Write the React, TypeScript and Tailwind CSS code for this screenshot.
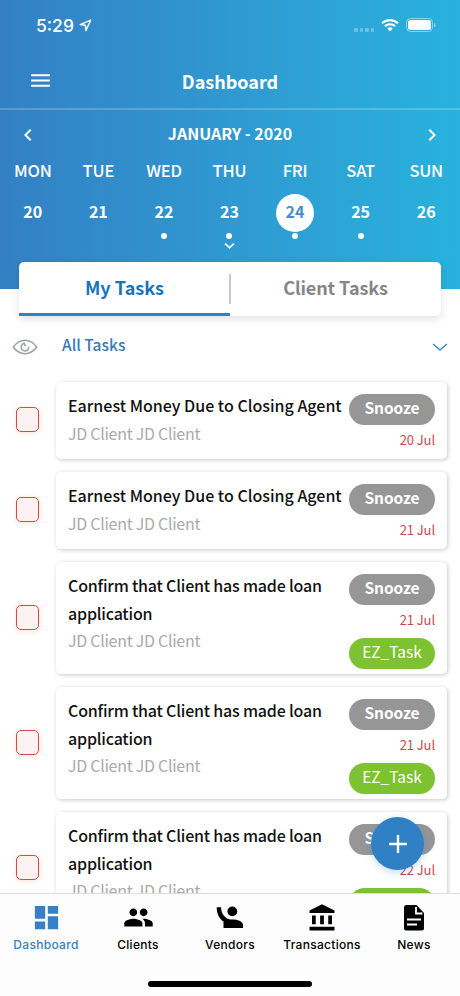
import clsx from "clsx";
import { MdAccountBalance, MdChevronLeft, MdChevronRight, MdDashboard, MdMenu, MdPeople } from "react-icons/md";

const days = [
  { name: "MON", date: 20 },
  { name: "TUE", date: 21 },
  { name: "WED", date: 22, dot: true },
  { name: "THU", date: 23, dot: true },
  { name: "FRI", date: 24, dot: true, selected: true },
  { name: "SAT", date: 25, dot: true },
  { name: "SUN", date: 26 },
];

type Task = { title: string[]; client: string; due: string; tag?: string };

const tasks: Task[] = [
  { title: ["Earnest Money Due to Closing Agent"], client: "JD Client JD Client", due: "20 Jul" },
  { title: ["Earnest Money Due to Closing Agent"], client: "JD Client JD Client", due: "21 Jul" },
  { title: ["Confirm that Client has made loan", "application"], client: "JD Client JD Client", due: "21 Jul", tag: "EZ_Task" },
  { title: ["Confirm that Client has made loan", "application"], client: "JD Client JD Client", due: "21 Jul", tag: "EZ_Task" },
  { title: ["Confirm that Client has made loan", "application"], client: "JD Client JD Client", due: "22 Jul", tag: "EZ_Task" },
];

function StatusBar() {
  return (
    <div className="flex h-[52px] items-center pr-6 pl-9">
      <span className="font-['Inter',sans-serif] text-[17.5px] font-medium">5:29</span>
      <svg className="mb-0.5 ml-[5px] h-[13px] w-[13px]" viewBox="0 0 13 13" fill="none" stroke="currentColor" strokeWidth="1.4" strokeLinejoin="round">
        <path d="M11.7 1.2 1.2 5.6l5.1.7.5 5.3z" />
      </svg>
      <div className="mt-2 ml-auto flex gap-[2px] opacity-30">
        {[0, 1, 2, 3].map((i) => (
          <span key={i} className="h-[4px] w-[3.5px] rounded-[1px] bg-white" />
        ))}
      </div>
      <svg className="mb-0.5 ml-[7px] h-[13px] w-[18px]" viewBox="0 0 18 13" fill="none" stroke="currentColor" strokeWidth="2.2">
        <path d="M1 4.3a11.6 11.6 0 0 1 16 0M3.9 7.3a7.4 7.4 0 0 1 10.2 0" />
        <path d="M6.3 9.6a4 4 0 0 1 5.4 0L9 12.6z" fill="currentColor" stroke="none" />
      </svg>
      <svg className="mb-0.5 ml-[7px] h-[14px] w-[30px]" viewBox="0 0 30 14" fill="none">
        <rect x="0.5" y="0.5" width="26" height="13" rx="4" stroke="white" opacity=".45" />
        <rect x="2" y="2" width="23" height="10" rx="2.5" fill="white" />
        <path d="M28 5v4.4c1-.4 1.5-1.3 1.5-2.2S29 5.4 28 5z" fill="white" opacity=".5" />
      </svg>
    </div>
  );
}

function WeekStrip() {
  return (
    <div className="grid w-[459px] grid-cols-7">
      {days.map((d) => (
        <div key={d.name} className="flex flex-col items-center">
          <span className="-mt-px h-6 text-[16.5px] leading-6 font-medium tracking-[-0.2px]">{d.name}</span>
          <span
            className={clsx(
              "mt-3 flex size-[38px] items-center justify-center rounded-full pb-[5px] text-base font-bold",
              d.selected && "bg-white text-[#4490cc]"
            )}
          >
            {d.date}
          </span>
          {d.dot && <span className="mt-px size-[6px] rounded-full bg-white" />}
          {d.name === "THU" && (
            <svg className="mt-1 h-[6px] w-[11px]" viewBox="0 0 11 6" fill="none" stroke="currentColor" strokeWidth="1.7">
              <path d="m1 .7 4.5 4 4.5-4" />
            </svg>
          )}
        </div>
      ))}
    </div>
  );
}

function Header() {
  return (
    <header className="h-[289px] bg-linear-to-r from-[#3380c4] to-[#28b2dd] text-white">
      <StatusBar />
      <div className="grid h-[58px] grid-cols-[80px_1fr_80px] items-center border-b-2 border-white/20">
        <MdMenu className="mt-px ml-[28px] size-[25px]" />
        <h1 className="pt-[2px] text-center text-[18px] font-bold">Dashboard</h1>
      </div>
      <div className="flex h-[49px] items-center justify-between px-4">
        <MdChevronLeft className="size-[24px]" />
        <span className="mb-[3px] text-[16px] font-bold">JANUARY - 2020</span>
        <MdChevronRight className="size-[24px]" />
      </div>
      <WeekStrip />
    </header>
  );
}

function Tabs() {
  return (
    <div className="relative mx-[19px] -mt-[27px] grid h-[54px] grid-cols-2 rounded-[5px] bg-white text-center text-[18px] font-bold shadow-[0_3px_8px_rgba(0,0,0,0.12)]">
      <button className="border-b-[3px] border-[#3580c0] pb-px text-[#1674bc]">My Tasks</button>
      <button className="border-b-[3px] border-transparent pb-px tracking-[-0.1px] text-[#858585]">Client Tasks</button>
      <span className="absolute top-3 left-[210px] h-[30px] w-[2px] bg-[#c8c8c8]" />
    </div>
  );
}

function Filter() {
  return (
    <div className="flex h-[58px] items-center pr-[12px] pl-[12px]">
      <svg className="mt-[3px] h-4 w-[26px]" viewBox="0 0 26 16" fill="none" stroke="#98a2a5" strokeWidth="1.5" strokeLinejoin="round">
        <path d="M1.2 8c7-9 16.600-9 23.600 0-7 9-16.600 9-23.600 0z" />
        <path d="M13 4.300a3.800 3.800 0 1 0 3.700 3.300M13 4.300c-1 1 0 2.700 1.300 2" />
      </svg>
      <span className="ml-6 text-[15.5px] font-medium text-[#3679b7]">All Tasks</span>
      <svg className="mt-[3px] ml-auto h-2 w-4" viewBox="0 0 16 8" fill="none" stroke="#3a86c8" strokeWidth="1.4">
        <path d="m1 1 7 6 7-6" />
      </svg>
    </div>
  );
}

function TaskRow({ task }: { task: Task }) {
  return (
    <div className="flex items-center">
      <span className="mt-[-2px] ml-[15.5px] h-[25px] w-[23.5px] rounded-[5px] border-[1.5px] border-[#cf4d45] bg-[#fdf2f1] shadow-[0_1px_6px_rgba(240,90,60,0.2)]" />
      <div
        className={clsx(
          "ml-[17px] flex w-[391px] justify-between rounded-[5px] bg-white pr-3 pl-3 shadow-[1px_1px_4px_rgba(0,0,0,0.22)]",
          task.tag ? "h-[112px]" : "h-[77px]"
        )}
      >
        <div className="pt-[10px] whitespace-nowrap">
          {task.title.map((line) => (
            <p
              key={line}
              className={clsx("text-[16px] leading-[27.5px] font-medium text-[#111]", task.tag && "tracking-[-0.2px]")}
            >
              {line}
            </p>
          ))}
          <p className="text-[16px] leading-[27px] tracking-[-0.28px] text-[#aaa]">{task.client}</p>
        </div>
        <div className="flex shrink-0 flex-col items-end pt-[12px]">
          <span className="h-[31px] w-[86px] rounded-full bg-[#969696] text-center text-[15.5px] leading-[27px] font-bold tracking-[-0.1px] text-white">
            Snooze
          </span>
          <span className="mt-[3px] h-[25px] text-[13px] leading-6 tracking-[-0.1px] text-[#c9494c]">{task.due}</span>
          {task.tag && (
            <span className="mt-[5px] h-[31px] w-[86px] rounded-full bg-[#7dc230] text-center text-[15.5px] leading-[27px] text-white">{task.tag}</span>
          )}
        </div>
      </div>
    </div>
  );
}

function VendorIcon() {
  return (
    <svg className="size-7" viewBox="0 0 28 28" fill="currentColor">
      <circle cx="16.3" cy="7.4" r="4.9" />
      <path d="M.7 3.2h4.400c0 5.500 2.500 9.800 7.400 11.700 1.200.5 2.500.6 4 .6 4.500 0 10.500 1.600 10.500 5.300V24H7.500v-6.500C3.200 14.800.7 9.500.7 3.200z" />
    </svg>
  );
}

function NewsIcon() {
  return (
    <svg className="size-7" viewBox="0 0 28 28">
      <path d="M6.5 1h10L24 9v15.500a2 2 0 0 1-2 2H6a2 2 0 0 1-2-2V3.500A2.500 2.500 0 0 1 6.500 1z" fill="currentColor" />
      <path d="M16 3v6.500h6.500M7 15.500h14M7 20.500h10" fill="none" stroke="white" strokeWidth="1.8" />
    </svg>
  );
}

const navItems = [
  { label: "Dashboard", icon: <MdDashboard className="size-[31px]" />, active: true },
  { label: "Clients", icon: <MdPeople className="size-[31px]" /> },
  { label: "Vendors", icon: <VendorIcon /> },
  { label: "Transactions", icon: <MdAccountBalance className="size-[30px]" /> },
  { label: "News", icon: <NewsIcon /> },
];

function BottomNav() {
  return (
    <nav className="absolute inset-x-0 bottom-0 h-[103px] border-t border-[#dcdcdc] bg-[#fdfdfd]">
      <div className="grid grid-cols-5 pt-2">
        {navItems.map((item) => (
          <div key={item.label} className={clsx("flex flex-col items-center", item.active ? "text-[#3681c5]" : "text-black")}>
            <div className="flex h-[31px] items-center">{item.icon}</div>
            <span className="mt-[3px] font-['Inter',sans-serif] text-[12px] leading-[18px] font-medium tracking-[0.3px]">{item.label}</span>
          </div>
        ))}
      </div>
      <div className="mx-auto mt-[27px] h-[6px] w-[164px] rounded-full bg-black" />
    </nav>
  );
}

export default function App() {
  return (
    <div className="relative h-[996px] w-[460px] overflow-hidden bg-white font-['Noto_Sans_CJK_SC','Noto_Sans',sans-serif]">
      <Header />
      <Tabs />
      <Filter />
      <main className="mt-2 flex flex-col gap-[13.1px]">
        {tasks.map((task, i) => (
          <TaskRow key={i} task={task} />
        ))}
      </main>
      <button className="absolute top-[817px] left-[371px] flex size-[53px] items-center justify-center rounded-full bg-[#2f80c5] shadow-[0_2px_9px_rgba(47,128,197,0.3)]">
        <svg className="size-[18px]" viewBox="0 0 18 18" stroke="white" strokeWidth="2.4">
          <path d="M9 0v18M0 9h18" />
        </svg>
      </button>
      <BottomNav />
    </div>
  );
}
